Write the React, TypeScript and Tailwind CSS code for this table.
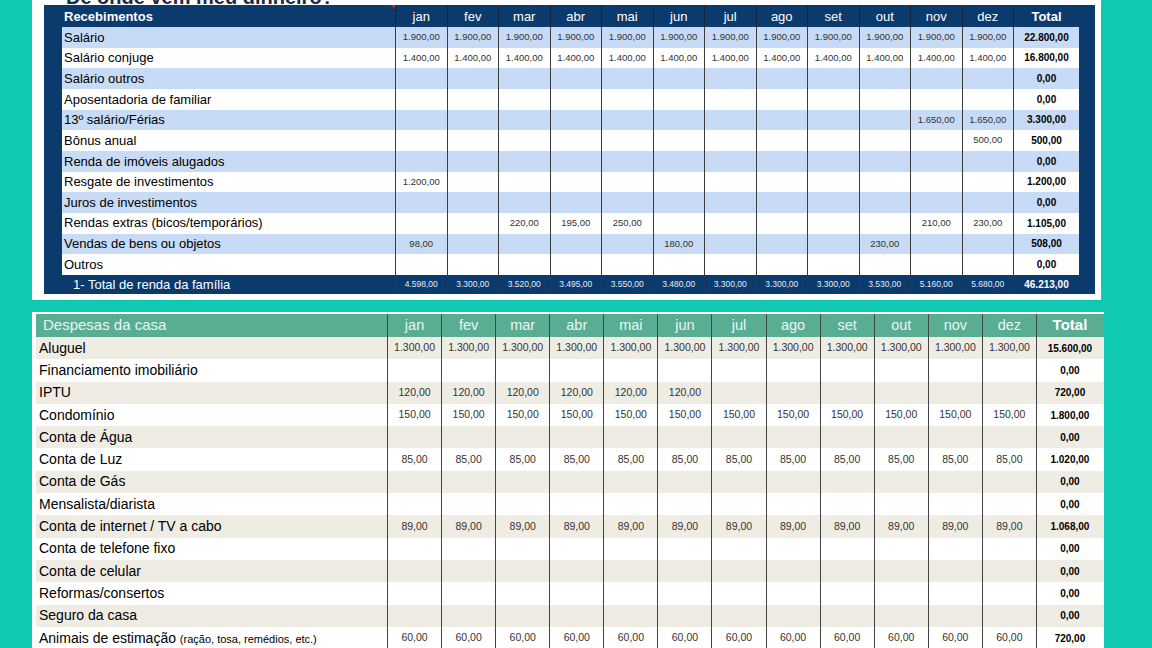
import React from "react";

const months = ["jan", "fev", "mar", "abr", "mai", "jun", "jul", "ago", "set", "out", "nov", "dez"];

type Row = { label: React.ReactNode; vals: Record<number, string>; total: string };

const fill = (v: string, from = 0, to = 11) => {
  const o: Record<number, string> = {};
  for (let i = from; i <= to; i++) o[i] = v;
  return o;
};

const income: Row[] = [
  { label: "Salário", vals: fill("1.900,00"), total: "22.800,00" },
  { label: "Salário conjuge", vals: fill("1.400,00"), total: "16.800,00" },
  { label: "Salário outros", vals: {}, total: "0,00" },
  { label: "Aposentadoria de familiar", vals: {}, total: "0,00" },
  { label: "13º salário/Férias", vals: { 10: "1.650,00", 11: "1.650,00" }, total: "3.300,00" },
  { label: "Bônus anual", vals: { 11: "500,00" }, total: "500,00" },
  { label: "Renda de imóveis alugados", vals: {}, total: "0,00" },
  { label: "Resgate de investimentos", vals: { 0: "1.200,00" }, total: "1.200,00" },
  { label: "Juros de investimentos", vals: {}, total: "0,00" },
  {
    label: "Rendas extras (bicos/temporários)",
    vals: { 2: "220,00", 3: "195,00", 4: "250,00", 10: "210,00", 11: "230,00" },
    total: "1.105,00",
  },
  { label: "Vendas de bens ou objetos", vals: { 0: "98,00", 5: "180,00", 9: "230,00" }, total: "508,00" },
  { label: "Outros", vals: {}, total: "0,00" },
];

const incomeTotals = [
  "4.598,00", "3.300,00", "3.520,00", "3.495,00", "3.550,00", "3.480,00",
  "3.300,00", "3.300,00", "3.300,00", "3.530,00", "5.160,00", "5.680,00",
];

const expenses: Row[] = [
  { label: "Aluguel", vals: fill("1.300,00"), total: "15.600,00" },
  { label: "Financiamento imobiliário", vals: {}, total: "0,00" },
  { label: "IPTU", vals: fill("120,00", 0, 5), total: "720,00" },
  { label: "Condomínio", vals: fill("150,00"), total: "1.800,00" },
  { label: "Conta de Água", vals: {}, total: "0,00" },
  { label: "Conta de Luz", vals: fill("85,00"), total: "1.020,00" },
  { label: "Conta de Gás", vals: {}, total: "0,00" },
  { label: "Mensalista/diarista", vals: {}, total: "0,00" },
  { label: "Conta de internet / TV a cabo", vals: fill("89,00"), total: "1.068,00" },
  { label: "Conta de telefone fixo", vals: {}, total: "0,00" },
  { label: "Conta de celular", vals: {}, total: "0,00" },
  { label: "Reformas/consertos", vals: {}, total: "0,00" },
  { label: "Seguro da casa", vals: {}, total: "0,00" },
  {
    label: (
      <span>
        Animais de estimação{" "}
        <span className="text-[11px]">(ração, tosa, remédios, etc.)</span>
      </span>
    ),
    vals: fill("60,00"),
    total: "720,00",
  },
];

function IncomeTable() {
  return (
    <div className="w-[1051px] h-[289px] bg-[#0b3a6d] pl-[18px] pr-[16px] flex flex-col">
      <div className="grid grid-cols-[333px_repeat(12,51.5px)_66px] h-[22px] text-white text-[13px]">
        <div className="relative pl-[2px] pt-[1px] flex items-center font-bold">
          Recebimentos
          <span className="absolute right-0 top-0 w-0 h-0 border-t-[4px] border-t-[#e0202a] border-l-[4px] border-l-transparent" />
        </div>
        {months.map((m) => (
          <div key={m} className="border-l border-[#1a2235] pt-[1px] flex items-center justify-center">
            {m}
          </div>
        ))}
        <div className="border-l border-[#1a2235] pt-[1px] flex items-center justify-center font-bold">Total</div>
      </div>
      {income.map((r, i) => (
        <div
          key={i}
          className={`grid grid-cols-[333px_repeat(12,51.5px)_66px] h-[20.67px] ${
            i % 2 === 0 ? "bg-[#c7daf6]" : "bg-white"
          }`}
        >
          <div className="pl-[2px] flex items-center text-[13px] text-black">{r.label}</div>
          {months.map((m, j) => (
            <div
              key={m}
              className="border-l border-[#3c3c3c] flex items-center justify-center text-[9.5px] text-[#333]"
            >
              {r.vals[j] ?? ""}
            </div>
          ))}
          <div className="border-l border-[#3c3c3c] flex items-center justify-center text-[10px] font-bold text-black">
            {r.total}
          </div>
        </div>
      ))}
      <div className="grid grid-cols-[333px_repeat(12,51.5px)_66px] h-[19px] text-white">
        <div className="pl-[11px] flex items-center text-[13px]">1- Total de renda da família</div>
        {incomeTotals.map((v, j) => (
          <div
            key={j}
            className="border-l border-[#24385a] flex items-center justify-center text-[8.5px] text-[#e6ecf5]"
          >
            {v}
          </div>
        ))}
        <div className="border-l border-[#24385a] flex items-center justify-center text-[10px] font-bold">
          46.213,00
        </div>
      </div>
    </div>
  );
}

function ExpenseTable() {
  return (
    <div className="flex flex-col">
      <div className="grid grid-cols-[351px_repeat(12,54.08px)_67px] h-[23px] bg-[#58ad93] text-[#eaf6f1] text-[14.5px]">
        <div className="pl-[7px] flex items-center text-[15px]">Despesas da casa</div>
        {months.map((m) => (
          <div key={m} className="border-l border-[#3d4a44] flex items-center justify-center">
            {m}
          </div>
        ))}
        <div className="border-l border-[#3d4a44] flex items-center justify-center font-bold text-[15px] text-white">
          Total
        </div>
      </div>
      {expenses.map((r, i) => (
        <div
          key={i}
          className={`grid grid-cols-[351px_repeat(12,54.08px)_67px] h-[22.3px] ${
            i % 2 === 0 ? "bg-[#efece4]" : "bg-white"
          }`}
        >
          <div className="pl-[3px] flex items-center text-[14px] text-black whitespace-nowrap">{r.label}</div>
          {months.map((m, j) => (
            <div
              key={m}
              className="border-l border-[#444] flex items-center justify-center text-[10.5px] text-[#333]"
            >
              {r.vals[j] ?? ""}
            </div>
          ))}
          <div className="border-l border-[#444] flex items-center justify-center text-[10px] font-bold text-black">
            {r.total}
          </div>
        </div>
      ))}
    </div>
  );
}

export default function App() {
  return (
    <div className="w-[1152px] h-[648px] overflow-hidden bg-[#10c9b1] font-['Liberation_Sans',Arial,sans-serif]">
      <div className="ml-[32px] w-[1069px] h-[300px] bg-white pl-[12px]">
        <div className="h-[5px] overflow-hidden flex items-end pl-[22px]">
          <span className="text-[20px] leading-[20px] font-bold text-[#1f2a44] -mb-[2px] whitespace-nowrap">
            De onde vem meu dinheiro?
          </span>
        </div>
        <IncomeTable />
      </div>
      <div className="h-[12px]" />
      <div className="ml-[32px] w-[1072px] bg-white pl-[4px] pt-[2px]">
        <ExpenseTable />
      </div>
    </div>
  );
}
